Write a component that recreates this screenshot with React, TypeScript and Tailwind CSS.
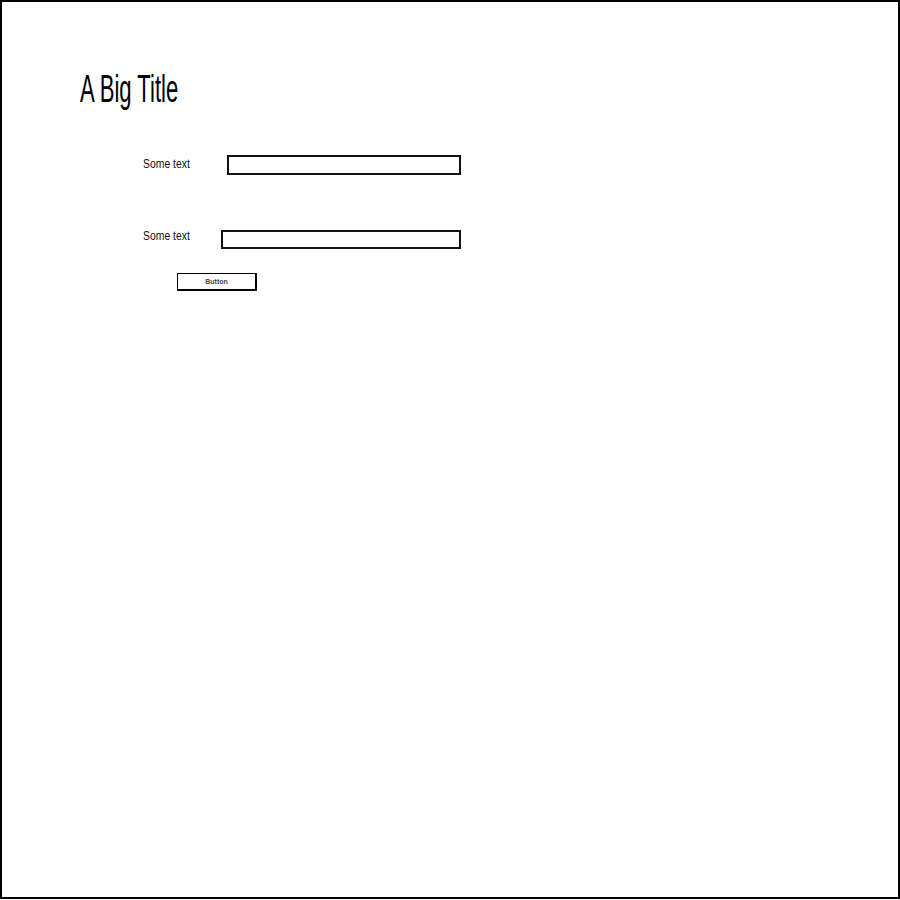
const sans = { fontFamily: '"Liberation Sans", Arial, sans-serif' }

export default function App() {
  return (
    <div className="w-[900px] h-[899px] border-2 border-black bg-white flex flex-col text-black" style={sans}>
      {/* Заголовок */}
      <div className="mt-[67px] ml-[78px] h-[26px]">
        <span className="inline-block text-[26px] leading-none origin-top-left scale-x-[0.85] scale-y-150">A Big Title</span>
      </div>

      {/* Первая строка формы */}
      <div className="mt-[60px] ml-[141px] flex items-start">
        <span className="w-[84px] mt-[2px] text-[13px] leading-none text-[#111] origin-left scale-x-[0.8] whitespace-nowrap">Some text</span>
        <div className="w-[234px] h-[20px] border-2 border-[#111] bg-white" />
      </div>

      {/* Вторая строка формы */}
      <div className="mt-[54px] ml-[141px] flex items-start">
        <span className="w-[78px] text-[13px] leading-none text-[#111] origin-left scale-x-[0.8] whitespace-nowrap">Some text</span>
        <div className="w-[240px] h-[19px] mt-[1px] border-2 border-[#111] bg-white" />
      </div>

      {/* Кнопка */}
      <div className="mt-[24px] ml-[175px]">
        <button className="w-[80px] h-[18px] border border-black border-r-2 border-b-2 bg-white flex items-center justify-center text-[7px] font-semibold leading-none text-[#444]">
          Button
        </button>
      </div>
    </div>
  )
}
